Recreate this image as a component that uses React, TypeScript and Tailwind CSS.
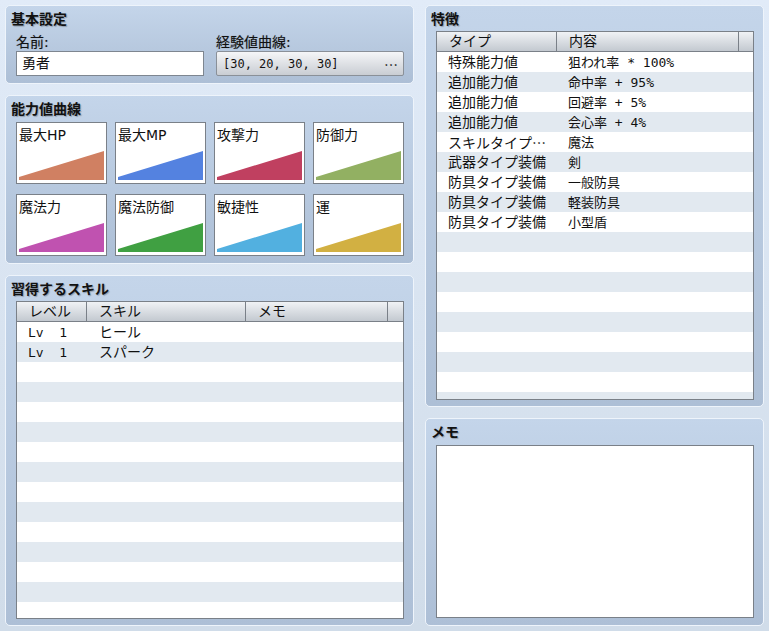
const sans = "font-['DejaVu_Sans','Noto_Sans_CJK_JP',sans-serif]"
const mono = "font-['DejaVu_Sans_Mono','Noto_Sans_CJK_JP',monospace]"
const cjk = "font-['Noto_Sans_CJK_JP',sans-serif]"

const panel =
  'flex flex-col rounded-[5px] border border-[#eef4fb] bg-linear-to-b from-[#c4d5ea] to-[#adbfd6] pl-[10px] pr-[9px] pt-[3px]'
const title =
  '-ml-[5px] h-[20px] text-[14px] leading-[20px] font-bold text-[#111] [text-shadow:1px_1px_1px_rgba(0,0,0,0.25)]'
const label = 'h-[18px] text-[14px] leading-[18px] text-[#111] [text-shadow:0_0_1px_rgba(0,0,0,0.35)]'

const curves = [
  { name: '最大HP', color: '#d08062' },
  { name: '最大MP', color: '#5482e0' },
  { name: '攻撃力', color: '#c04060' },
  { name: '防御力', color: '#92b062' },
  { name: '魔法力', color: '#c052b0' },
  { name: '魔法防御', color: '#40a042' },
  { name: '敏捷性', color: '#52b0e0' },
  { name: '運', color: '#d2b042' },
]

const skills = [
  { lv: 'Lv  1', skill: 'ヒール' },
  { lv: 'Lv  1', skill: 'スパーク' },
]

const traits = [
  { type: '特殊能力値', value: '狙われ率 * 100%' },
  { type: '追加能力値', value: '命中率 + 95%' },
  { type: '追加能力値', value: '回避率 + 5%' },
  { type: '追加能力値', value: '会心率 + 4%' },
  { type: 'スキルタイプ', more: true, value: '魔法' },
  { type: '武器タイプ装備', value: '剣' },
  { type: '防具タイプ装備', value: '一般防具' },
  { type: '防具タイプ装備', value: '軽装防具' },
  { type: '防具タイプ装備', value: '小型盾' },
]

function CurveCard({ name, color }: { name: string; color: string }) {
  return (
    <div className="flex h-[62px] flex-col border border-[#7a8088] bg-white px-[2px] pt-[2px] pb-[3px]">
      <div className="h-[20px] text-[14px] leading-[20px] text-[#111]">{name}</div>
      <svg className="mt-auto block" width="85" height="29" viewBox="0 0 85 29">
        <polygon points="0,26 85,0 85,29 0,29" fill={color} />
      </svg>
    </div>
  )
}

function HeaderCell({ w, text }: { w: string; text?: string }) {
  return (
    <div className={`${w} h-full border-r border-[#7a8088] pl-[12px] text-[14px] leading-[19px] text-[#111]`}>
      {text}
    </div>
  )
}

export default function App() {
  const skillRows = Array.from({ length: 16 }, (_, i) => skills[i])
  const traitRows = Array.from({ length: 18 }, (_, i) => traits[i])

  return (
    <div
      className={`${sans} flex h-[631px] w-[769px] gap-[11px] overflow-hidden bg-linear-to-b from-[#e1ebf8] to-[#d0dce9] p-[5px]`}
    >
      {/* left column */}
      <div className="flex w-[409px] flex-col gap-[11px]">
        <div className={`${panel} h-[79px]`}>
          <div className={title}>基本設定</div>
          <div className="mt-[4px] flex gap-[12px]">
            <div className="w-[188px]">
              <div className={label}>名前:</div>
              <div className="flex h-[25px] items-center border border-[#7e8690] bg-white pl-[5px] text-[14px] text-[#111]">
                勇者
              </div>
            </div>
            <div className="w-[188px]">
              <div className={label}>経験値曲線:</div>
              <div className="flex h-[25px] items-center justify-between rounded-[2px] border border-[#8a9098] bg-linear-to-b from-[#f5f6f8] to-[#c9cdd3] pr-[5px] pl-[6px] text-[#111]">
                <span className={`${mono} text-[12px]`}>[30, 20, 30, 30]</span>
                <span className={`${cjk} text-[14px] leading-none`}>…</span>
              </div>
            </div>
          </div>
        </div>

        <div className={`${panel} h-[169px]`}>
          <div className={title}>能力値曲線</div>
          <div className="mt-[3px] grid grid-cols-4 gap-x-[8px] gap-y-[10px]">
            {curves.map((c) => (
              <CurveCard key={c.name} name={c.name} color={c.color} />
            ))}
          </div>
        </div>

        <div className={`${panel} min-h-0 flex-1 pb-[6px]`}>
          <div className={title}>習得するスキル</div>
          <div className="mt-[2px] flex min-h-0 flex-1 flex-col overflow-hidden border border-[#7a8088] bg-white">
            <div className="flex h-[20px] shrink-0 border-b border-[#7a8088] bg-linear-to-b from-[#f0f2f5] to-[#c3c9d0]">
              <HeaderCell w="w-[70px]" text="レベル" />
              <HeaderCell w="w-[159px]" text="スキル" />
              <HeaderCell w="w-[142px]" text="メモ" />
            </div>
            {skillRows.map((r, i) => (
              <div
                key={i}
                className={`flex h-[20px] shrink-0 items-center pt-[1px] text-[14px] text-[#111] ${i % 2 === 1 ? 'bg-[#e2e9f0]' : 'bg-white'}`}
              >
                <div className={`${mono} w-[70px] pl-[11px] text-[13px] whitespace-pre`}>{r?.lv}</div>
                <div className="w-[159px] pl-[12px]">{r?.skill}</div>
              </div>
            ))}
          </div>
        </div>
      </div>

      {/* right column */}
      <div className="flex w-[339px] flex-col gap-[11px]">
        <div className={`${panel} h-[402px] pb-[6px]`}>
          <div className={title}>特徴</div>
          <div className="mt-[2px] flex min-h-0 flex-1 flex-col overflow-hidden border border-[#7a8088] bg-white">
            <div className="flex h-[20px] shrink-0 border-b border-[#7a8088] bg-linear-to-b from-[#f0f2f5] to-[#c3c9d0]">
              <HeaderCell w="w-[120px]" text="タイプ" />
              <HeaderCell w="w-[182px]" text="内容" />
            </div>
            {traitRows.map((r, i) => (
              <div
                key={i}
                className={`flex h-[20px] shrink-0 items-center pt-[1px] text-[14px] text-[#111] ${i % 2 === 1 ? 'bg-[#e2e9f0]' : 'bg-white'}`}
              >
                <div className="w-[120px] pl-[11px] whitespace-nowrap">
                  {r?.type}
                  {r?.more && <span className={cjk}>…</span>}
                </div>
                <div className={`${mono} w-[182px] pl-[11px] text-[13px]`}>{r?.value}</div>
              </div>
            ))}
          </div>
        </div>

        <div className={`${panel} min-h-0 flex-1 pb-[7px]`}>
          <div className={title}>メモ</div>
          <div className="mt-[3px] flex-1 border border-[#7a8088] bg-white" />
        </div>
      </div>
    </div>
  )
}
